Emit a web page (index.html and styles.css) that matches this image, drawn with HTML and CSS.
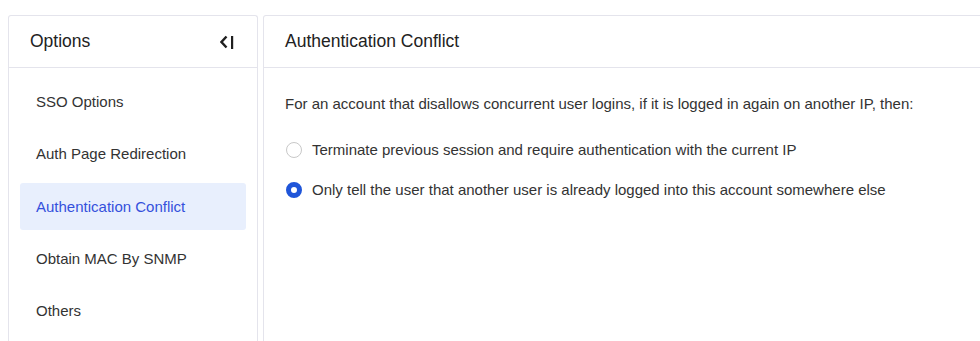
FILE: index.html
```html
<!DOCTYPE html>
<html>
<head>
  <title>Authentication Conflict</title>
  <meta charset="utf-8">
  <link rel="stylesheet" href="styles.css">
</head>
<body>
  <div class="page">
    <div class="side-panel">
      <div class="panel-header">
        <span>Options</span>
        <svg class="collapse-icon" width="14" height="14" viewBox="0 0 14 14">
          <polyline points="6.5,1.5 1.5,7 6.5,12.5" fill="none" stroke="#1f1f1f" stroke-width="2.4"/>
          <rect x="11" y="1" width="2.2" height="13" fill="#1f1f1f"/>
        </svg>
      </div>
      <ul class="menu">
        <li class="menu-item">SSO Options</li>
        <li class="menu-item">Auth Page Redirection</li>
        <li class="menu-item active">Authentication Conflict</li>
        <li class="menu-item">Obtain MAC By SNMP</li>
        <li class="menu-item">Others</li>
      </ul>
    </div>

    <div class="main-panel">
      <div class="panel-header">
        <span>Authentication Conflict</span>
      </div>
      <div class="panel-body">
        <p class="desc">For an account that disallows concurrent user logins, if it is logged in again on another IP, then:</p>
        <div class="radio-group">
          <label class="radio-row">
            <span class="radio"></span>
            <span>Terminate previous session and require authentication with the current IP</span>
          </label>
          <label class="radio-row">
            <span class="radio checked"></span>
            <span>Only tell the user that another user is already logged into this account somewhere else</span>
          </label>
        </div>
      </div>
    </div>
  </div>
</body>
</html>
```

FILE: styles.css
```css
* {
  margin: 0;
  padding: 0;
  box-sizing: border-box;
}

body {
  font-family: "Liberation Sans", Arial, sans-serif;
  background: #fff;
  color: #333;
  overflow: hidden;
}

.page {
  display: flex;
  gap: 5px;
  padding: 15px 0 0 8px;
  width: 1010px;
  height: 341px;
}

.side-panel,
.main-panel {
  border: 1px solid #e4e4ec;
  border-bottom: none;
  border-radius: 3px 3px 0 0;
  background: #fff;
}

.side-panel {
  width: 250px;
  flex-shrink: 0;
}

.main-panel {
  flex: 1;
}

.panel-header {
  height: 52px;
  padding: 0 21px;
  border-bottom: 1px solid #e4e4ec;
  display: flex;
  align-items: center;
  justify-content: space-between;
  font-size: 17.5px;
  color: #222;
}

.collapse-icon {
  margin-right: 2px;
}

.menu {
  list-style: none;
  padding: 10px 11px 0;
  display: flex;
  flex-direction: column;
  gap: 5.25px;
}

.menu-item {
  height: 47px;
  line-height: 47px;
  padding: 0 16px;
  font-size: 15px;
  color: #333;
  border-radius: 3px;
}

.menu-item.active {
  background: #e8effd;
  color: #3451dc;
}

.panel-body {
  padding: 26px 21px;
  font-size: 15px;
}

.desc {
  line-height: 20px;
}

.radio-group {
  margin-top: 26px;
  display: flex;
  flex-direction: column;
  gap: 20px;
}

.radio-row {
  display: flex;
  align-items: center;
  gap: 10px;
  line-height: 20px;
}

.radio {
  width: 16px;
  height: 16px;
  margin-left: 1px;
  border: 1px solid #c8c8c8;
  border-radius: 50%;
  background: #fff;
}

.radio.checked {
  border: 5px solid #1f55d9;
}
```
